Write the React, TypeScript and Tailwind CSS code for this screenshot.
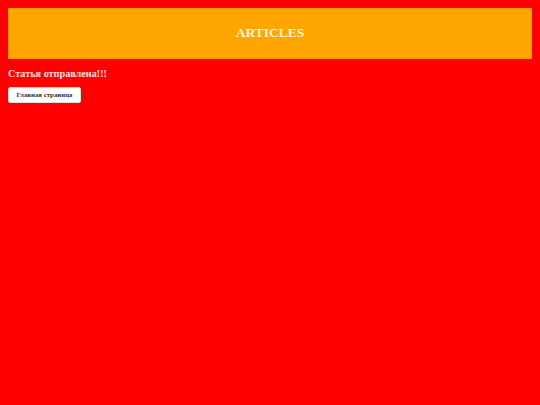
export default function App() {
  return (
    <div className="min-h-[405px] bg-[#ff0000] p-2 font-['Liberation_Serif',serif]">
      <header className="flex h-[51px] items-center justify-center border border-[#f39a00] bg-[#ffa500]">
        <h1 className="text-[13.5px] font-bold text-[#fff8dc]">ARTICLES</h1>
      </header>
      <h2 className="mt-[8px] text-[10.2px] font-bold leading-[13px] text-[#ffe4e1]">Статья отправлена!!!</h2>
      <button className="mt-[7px] h-[16px] w-[73px] rounded-[2px] border border-[#dddddd] bg-white text-[6.8px] font-bold text-[#333333]">
        Главная страница
      </button>
    </div>
  );
}
